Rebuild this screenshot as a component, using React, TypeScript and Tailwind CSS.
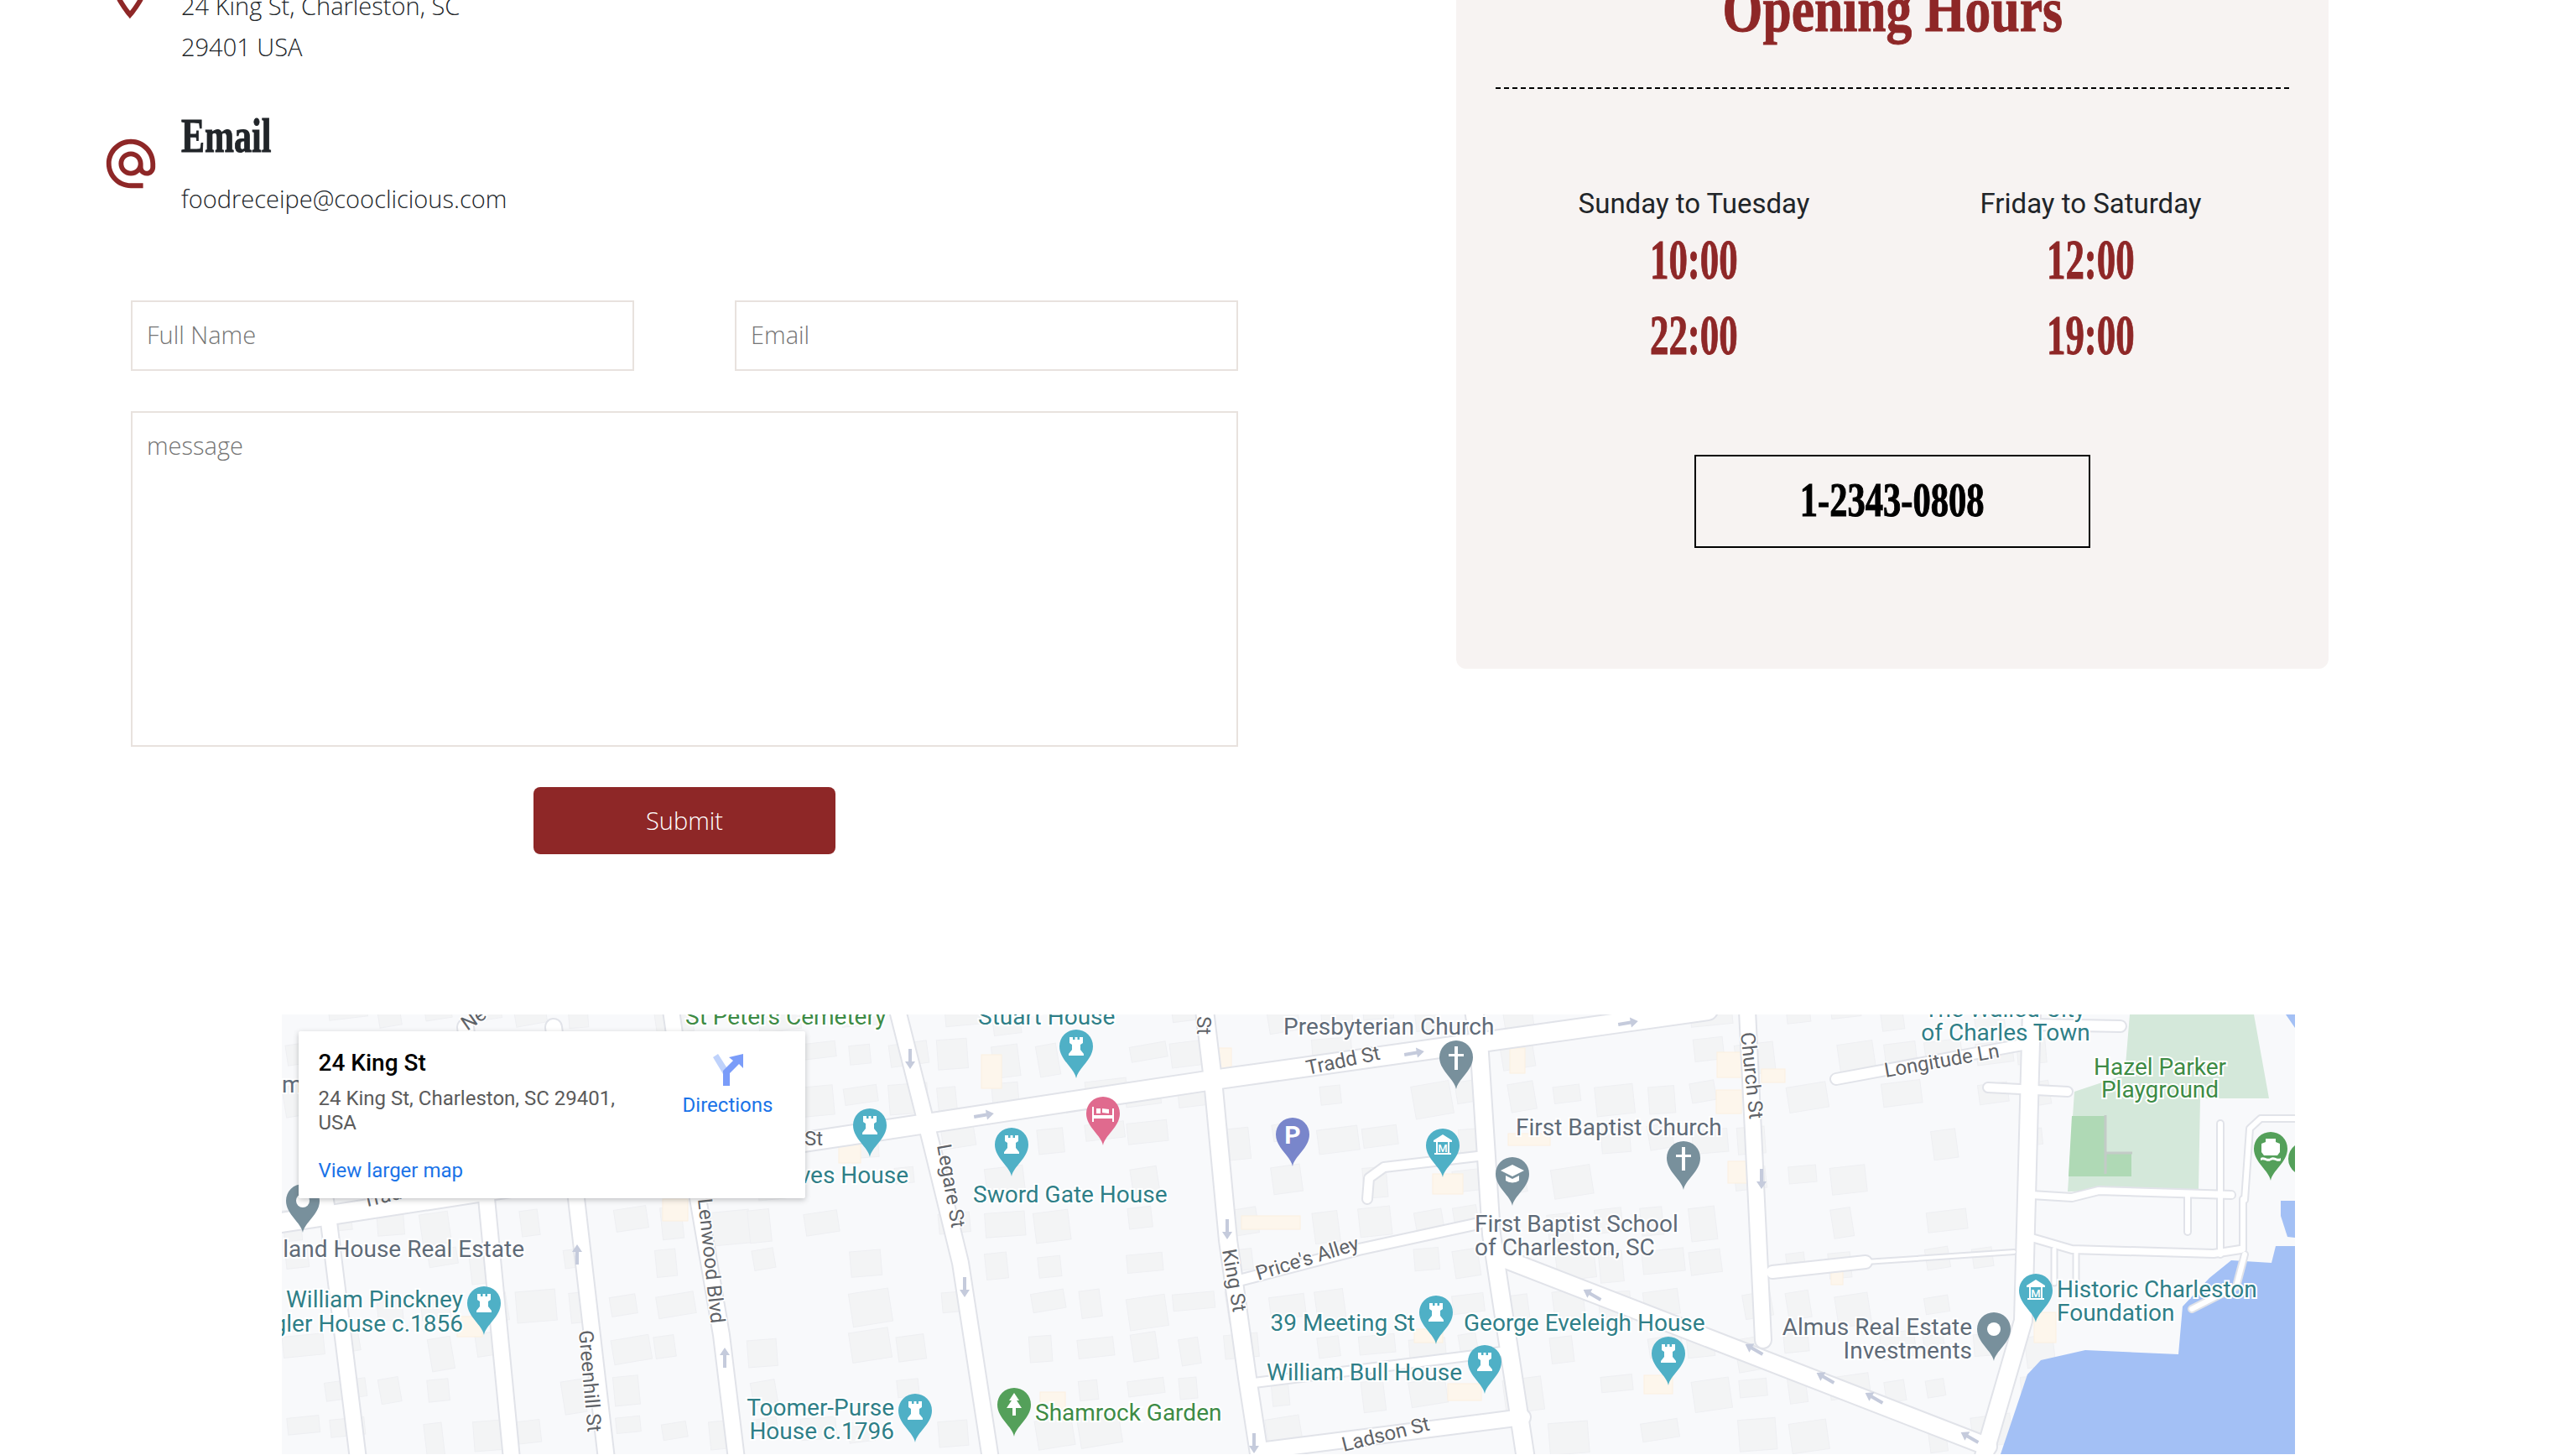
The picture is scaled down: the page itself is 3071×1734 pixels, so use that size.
import { MdAlternateEmail, MdOutlineLocationOn } from "react-icons/md";

const TEAL = "#2f7f88";
const GREEN = "#3d8b45";
const GRAY = "#5f6b78";
const ROAD = "#5f6368";

type Label = [string, number, number, string, ("start" | "end" | "middle")?];
type RoadLabel = [string, number, number, number];
type PinKind = "rook" | "dot" | "bed" | "park" | "cross" | "museum" | "school" | "tree" | "ferry";
type Pin = [number, number, string, PinKind];

const labels: Label[] = [
  ["St Peters Cemetery", 817, 1222, GREEN],
  ["Stuart House", 1166, 1222, TEAL],
  ["Presbyterian Church", 1530, 1234, GRAY],
  ["The Walled City", 2390, 1213, TEAL, "middle"],
  ["of Charles Town", 2391, 1241, TEAL, "middle"],
  ["Hazel Parker", 2575, 1282, GREEN, "middle"],
  ["Playground", 2575, 1309, GREEN, "middle"],
  ["First Baptist Church", 1807, 1354, GRAY],
  ["First Baptist School", 1758, 1469, GRAY],
  ["of Charleston, SC", 1758, 1497, GRAY],
  ["Historic Charleston", 2452, 1547, TEAL],
  ["Foundation", 2452, 1575, TEAL],
  ["Almus Real Estate", 2351, 1592, GRAY, "end"],
  ["Investments", 2351, 1620, GRAY, "end"],
  ["George Eveleigh House", 1745, 1587, TEAL],
  ["39 Meeting St", 1687, 1587, TEAL, "end"],
  ["William Bull House", 1743, 1646, TEAL, "end"],
  ["Shamrock Garden", 1234, 1694, GREEN],
  ["Sword Gate House", 1160, 1434, TEAL],
  ["ves House", 1083, 1411, TEAL, "end"],
  ["land House Real Estate", 625, 1499, GRAY, "end"],
  ["William Pinckney", 552, 1559, TEAL, "end"],
  ["Shingler House c.1856", 552, 1588, TEAL, "end"],
  ["Toomer-Purse", 1066, 1688, TEAL, "end"],
  ["House c.1796", 1066, 1716, TEAL, "end"],
  ["m", 336, 1303, GRAY],
];

const roadLabels: RoadLabel[] = [
  ["Tradd St", 1559, 1282, -12],
  ["Tradd St", 434, 1440, -13],
  ["Longitude Ln", 2248, 1285, -10],
  ["Church St", 2075, 1232, 84],
  ["Lenwood Blvd", 832, 1430, 84],
  ["Greenhill St", 690, 1587, 85],
  ["Legare St", 1117, 1366, 80],
  ["King St", 1457, 1491, 80],
  ["Price's Alley", 1500, 1527, -17],
  ["Ladson St", 1602, 1731, -14],
  ["St", 1427, 1212, 90],
  ["St", 959, 1366, 0],
  ["Ne", 557, 1230, -35],
];

const pins: Pin[] = [
  [361, 1412, "#78909c", "dot"],
  [577, 1534, "#4fb0c6", "rook"],
  [1037, 1322, "#4fb0c6", "rook"],
  [1091, 1662, "#4fb0c6", "rook"],
  [1283, 1228, "#4fb0c6", "rook"],
  [1315, 1308, "#e06a8e", "bed"],
  [1206, 1345, "#4fb0c6", "rook"],
  [1541, 1333, "#7986cb", "park"],
  [1736, 1241, "#78909c", "cross"],
  [1720, 1346, "#4fb0c6", "museum"],
  [1803, 1380, "#78909c", "school"],
  [1712, 1545, "#4fb0c6", "rook"],
  [1770, 1604, "#4fb0c6", "rook"],
  [1209, 1655, "#54a05a", "tree"],
  [2007, 1361, "#78909c", "cross"],
  [2707, 1350, "#54a05a", "ferry"],
  [1989, 1594, "#4fb0c6", "rook"],
  [2427, 1519, "#4fb0c6", "museum"],
  [2377, 1565, "#78909c", "dot"],
];

// [width, points]
const roads: [number, string][] = [
  [22, "336,1458 959,1362 1130,1336 1446,1288 1930,1220 2036,1205"],
  [20, "1436,1205 1446,1288 1464,1479 1487,1643 1502,1740"],
  [18, "1070,1205 1110,1363 1145,1506 1181,1740"],
  [18, "800,1205 832,1429 860,1592 878,1740"],
  [18, "660,1225 687,1429 723,1740"],
  [18, "555,1225 580,1429 610,1740"],
  [18, "372,1340 391,1449 427,1740"],
  [20, "1757,1205 1763,1241 1778,1472 1819,1740"],
  [18, "2083,1205 2102,1598"],
  [20, "2422,1205 2412,1575 2364,1740"],
  [20, "1790,1500 2370,1725"],
  [12, "1477,1527 1620,1490 1763,1459"],
  [18, "1502,1730 1815,1690"],
  [10, "1487,1650 1790,1612"],
  [12, "2189,1287 2422,1244"],
  [12, "2422,1222 2528,1224"],
  [10, "2370,1297 2465,1302"],
  [14, "2113,1517 2224,1505"],
  [4, "2224,1505 2401,1493"],
  [8, "2422,1425 2470,1428 2502,1420 2660,1425"],
  [8, "2422,1476 2470,1490 2639,1495 2671,1490"],
  [6, "2647,1340 2647,1496"],
  [6, "2674,1430 2674,1490"],
  [6, "2676,1431 2682,1346 2695,1334 2736,1334"],
  [6, "2608,1425 2608,1469"],
  [5, "2449,1490 2449,1530"],
  [5, "2475,1495 2475,1530"],
  [6, "2676,1496 2666,1534 2613,1561"],
  [10, "1630,1430 1632,1405 1650,1392 1770,1378"],
];

const arrows: [number, number, number][] = [
  [688, 1496, 0], [864, 1619, 0], [1085, 1263, 180], [1173, 1330, 80], [1686, 1256, 80],
  [1463, 1466, 180], [1150, 1535, 180], [1495, 1721, 180], [1898, 1544, -60], [1941, 1220, 80],
  [2100, 1406, 180], [2091, 1609, -60], [2176, 1643, -60], [2234, 1667, -60], [2348, 1714, -60],
];

const tanBuildings: [number, number, number, number][] = [
  [1170, 1258, 24, 40], [1450, 1250, 18, 30], [1290, 1300, 24, 20], [1800, 1250, 18, 30],
  [1480, 1450, 70, 16], [1708, 1400, 36, 24], [1798, 1352, 50, 14], [1686, 1585, 34, 16],
  [1726, 1650, 40, 20], [2047, 1255, 34, 30], [2100, 1275, 28, 16], [2046, 1300, 30, 28],
  [2060, 1385, 26, 26], [2183, 1510, 14, 22], [2425, 1565, 26, 36], [1240, 1660, 30, 20],
  [545, 1570, 30, 24], [790, 1430, 30, 26], [1000, 1365, 26, 22], [1960, 1640, 34, 22],
];

// deterministic scatter of building blocks, the roads and water are painted over them
const buildings: { x: number; y: number; w: number; h: number; r: number }[] = [];
let seed = 11;
const rand = () => {
  seed = (seed * 16807) % 2147483647;
  return seed / 2147483647;
};
for (let gy = 1190; gy < 1740; gy += 50) {
  for (let gx = 330; gx < 2440; gx += 56) {
    if (rand() < 0.36) continue;
    buildings.push({
      x: gx + rand() * 12,
      y: gy + rand() * 10,
      w: 20 + rand() * 30,
      h: 18 + rand() * 22,
      r: -10 + rand() * 6,
    });
  }
}

function PinGlyph({ kind }: { kind: PinKind }) {
  switch (kind) {
    case "rook":
      return <path d="M-8 9h4v3h2.5v-3h3v3h2.5v-3h4v7l-3 2v6l4 5v2h-18v-2l4-5v-6l-3-2z" fill="#fff" />;
    case "dot":
      return <circle cy="20" r="8" fill="#fff" />;
    case "bed":
      return <path d="M-13 12h2v10h22v-8h2v16h-2v-4h-22v4h-2zM-8 14h5v6h-5zM-1 19v-5l8 1v5z" fill="#fff" />;
    case "park":
      return (
        <text y="31" textAnchor="middle" fontSize="30" fontWeight="700" fill="#fff">
          P
        </text>
      );
    case "cross":
      return <path d="M-2 7h4v9h7v3h-7v16h-4v-16h-7v-3h7z" fill="#fff" />;
    case "museum":
      return (
        <g fill="#fff">
          <path d="M0 7l11 7v2h-22v-2z" />
          <rect x="-10" y="29" width="20" height="2" />
          <rect x="-8" y="16" width="2" height="13" />
          <rect x="6" y="16" width="2" height="13" />
          <text y="28" textAnchor="middle" fontSize="13" fontWeight="500">
            M
          </text>
        </g>
      );
    case "school":
      return (
        <g fill="#fff">
          <path d="M0 9l14 7-14 7-14-7z" />
          <path d="M-8 22l8 4 8-4v6a10 6 0 0 1-16 0z" />
        </g>
      );
    case "tree":
      return <path d="M0 6l6 9h-3l6 9h-7v9h-4v-9h-7l6-9h-3z" fill="#fff" />;
    case "ferry":
      return (
        <g fill="#fff">
          <path d="M-6 8h12v4l5 2v10l-3 4h-16l-3-4v-10l5-2z" />
          <path d="M-12 31c4-3 8 3 12 0s8 3 12 0v3c-4 3-8-3-12 0s-8-3-12 0z" />
        </g>
      );
  }
}

function MapCanvas() {
  return (
    <svg
      viewBox="336 1210 2400 524"
      width="2400"
      height="524"
      className="block font-['Roboto',sans-serif]"
    >
      <rect x="336" y="1210" width="2400" height="524" fill="#f8f9fb" />
      {buildings.map((b, i) => (
        <rect
          key={i}
          x={b.x}
          y={b.y}
          width={b.w}
          height={b.h}
          fill="#f3f4f5"
          stroke="#eeeff2"
          transform={`rotate(${b.r} ${b.x} ${b.y})`}
        />
      ))}
      {tanBuildings.map(([x, y, w, h], i) => (
        <rect key={i} x={x} y={y} width={w} height={h} fill="#fdf6ec" stroke="#fbf0e0" />
      ))}

      <polygon
        points="2539,1210 2687,1210 2705,1310 2623,1310 2621,1418 2465,1421 2473,1302 2533,1282"
        fill="#d4e8da"
      />
      <polygon points="2470,1331 2510,1331 2510,1375 2541,1375 2541,1403 2466,1403" fill="#afd9b5" />
      <path d="M2510 1330v70M2510 1375h32" stroke="#c3cbc7" strokeWidth="3" fill="none" />
      <polygon
        points="2736,1486 2713,1486 2708,1506 2660,1503 2634,1524 2602,1558 2597,1615 2486,1610 2433,1622 2417,1639 2385,1734 2736,1734"
        fill="#a3c0f5"
      />
      <polygon points="2719,1432 2736,1432 2736,1476 2727,1475 2719,1450" fill="#a3c0f5" />
      <polygon points="2725,1210 2736,1210 2736,1226" fill="#a3c0f5" />

      {roads.map(([w, pts], i) => (
        <polyline
          key={`c${i}`}
          points={pts}
          fill="none"
          stroke="#e1e3e9"
          strokeWidth={w + 4}
          strokeLinecap="round"
          strokeLinejoin="round"
        />
      ))}
      {roads.map(([w, pts], i) => (
        <polyline
          key={`r${i}`}
          points={pts}
          fill="none"
          stroke="#fff"
          strokeWidth={w}
          strokeLinecap="round"
          strokeLinejoin="round"
        />
      ))}

      {arrows.map(([x, y, r], i) => (
        <path
          key={i}
          d="M0 -12l6 9h-4v15h-4v-15h-4z"
          fill="#c5cbdc"
          transform={`translate(${x} ${y}) rotate(${r})`}
        />
      ))}

      {labels.map(([text, x, y, color, anchor], i) => (
        <text
          key={i}
          x={x}
          y={y}
          fill={color}
          textAnchor={anchor ?? "start"}
          fontSize="28"
          stroke="#fff"
          strokeWidth="4"
          paintOrder="stroke"
        >
          {text}
        </text>
      ))}
      {roadLabels.map(([text, x, y, r], i) => (
        <text
          key={i}
          x={x}
          y={y}
          fill={ROAD}
          fontSize="24"
          stroke="#fff"
          strokeWidth="3"
          paintOrder="stroke"
          transform={`rotate(${r} ${x} ${y})`}
        >
          {text}
        </text>
      ))}

      {pins.map(([x, y, color, kind], i) => (
        <g key={i} transform={`translate(${x} ${y})`}>
          <path d="M0 58C-2 46-20 36-20 20A20 20 0 1 1 20 20C20 36 2 46 0 58Z" fill={color} />
          <PinGlyph kind={kind} />
        </g>
      ))}
      <path d="M2736 1366a20 20 0 0 0 0 32z" fill="#54a05a" />
    </svg>
  );
}

function InfoCard() {
  return (
    <div className="absolute left-[20px] top-[20px] w-[604px] h-[199px] bg-white rounded-[2px] shadow-[0_2px_6px_rgba(60,64,67,0.3)] px-[24px] pt-[20px] flex font-['Roboto',sans-serif]">
      <div className="w-[390px]">
        <div className="text-[28px] leading-[36px] font-medium text-black">24 King St</div>
        <div className="mt-[10px] text-[24px] leading-[29px] text-[#5b5b5b]">
          24 King St, Charleston, SC 29401, USA
        </div>
        <a className="block mt-[26px] text-[24px] leading-[32px] text-[#1a73e8]">View larger map</a>
      </div>
      <div className="ml-[44px] w-[108px] flex flex-col items-center text-[24px] text-[#1a73e8]">
        <svg viewBox="0 0 36 38" width="36" height="38" className="mt-[7px]">
          <path d="M0 4l6-4 14 22v16h-8V24z" fill="#bfd2fb" />
          <path d="M12 38V20L24 8l-5-4L36 0v17l-5-5-11 11v15z" fill="#7a9cf9" />
        </svg>
        <span className="mt-[7px] leading-[32px]">Directions</span>
      </div>
    </div>
  );
}

function HoursColumn({ day, times }: { day: string; times: string[] }) {
  return (
    <div className="flex flex-col items-center">
      <div className="h-[45px] text-[33px] leading-[48px] text-[#212529] font-['Roboto',sans-serif]">{day}</div>
      {times.map((time) => (
        <div key={time} className="h-[90px] leading-[90px]">
          <span className="inline-block scale-x-[0.66] text-[68px] font-bold text-[#8e2727] [-webkit-text-stroke:1px_#8e2727] font-['Liberation_Serif',serif]">
            {time}
          </span>
        </div>
      ))}
    </div>
  );
}

export default function App() {
  return (
    <div className="h-[1734px] overflow-hidden bg-white">
      <div className="-mt-[120px]">
        <div className="flex">
          <div className="w-[1736px] shrink-0 pt-[102px] text-[29px] leading-[49px] font-light text-[#212529] font-['Open_Sans',sans-serif]">
            <div className="flex items-start">
              <MdOutlineLocationOn className="ml-[120px] mr-[26px] -mt-[24px] shrink-0 text-[#8e2727]" size={70} />
              <div>
                <div>24 King St, Charleston, SC</div>
                <div>29401 USA</div>
              </div>
            </div>
            <div className="flex items-start mt-[48px]">
              <MdAlternateEmail className="ml-[121px] mr-[25px] mt-[32px] shrink-0 text-[#8e2727]" size={70} />
              <div>
                <div className="h-[64px] leading-[68px] origin-left scale-x-[0.75] text-[56px] font-bold [-webkit-text-stroke:1px_#212529] font-['Liberation_Serif',serif]">
                  Email
                </div>
                <div className="mt-[20px]">foodreceipe@cooclicious.com</div>
              </div>
            </div>
            <form className="ml-[156px] w-[1320px] mt-[97px]">
              <div className="grid grid-cols-2 gap-[120px]">
                <input
                  placeholder="Full Name"
                  className="h-[84px] border-2 border-[#e8e2de] px-[17px] pb-[4px] outline-none placeholder:text-[#757575]"
                />
                <input
                  placeholder="Email"
                  className="h-[84px] border-2 border-[#e8e2de] px-[17px] pb-[4px] outline-none placeholder:text-[#757575]"
                />
              </div>
              <textarea
                placeholder="message"
                className="block mt-[48px] w-full h-[400px] border-2 border-[#e8e2de] px-[17px] py-[14px] outline-none resize-none placeholder:text-[#757575]"
              />
              <button
                type="button"
                className="block mx-auto mt-[48px] w-[360px] h-[80px] rounded-[8px] bg-[#8e2727] pb-[2px] text-white"
              >
                Submit
              </button>
            </form>
          </div>

          <div className="w-[1040px] h-[917px] rounded-[12px] bg-[#f7f3f2] px-[47px] pt-[86px]">
            <div className="h-[94px] leading-[90px] text-center">
              <span className="inline-block scale-x-[0.81] text-[76px] font-bold text-[#8e2727] [-webkit-text-stroke:1px_#8e2727] font-['Liberation_Serif',serif]">
                Opening Hours
              </span>
            </div>
            <div className="mt-[44px] border-t-2 border-dashed border-black" />
            <div className="mt-[113px] grid grid-cols-2">
              <HoursColumn day="Sunday to Tuesday" times={["10:00", "22:00"]} />
              <HoursColumn day="Friday to Saturday" times={["12:00", "19:00"]} />
            </div>
            <div className="mx-auto mt-[98px] w-[472px] h-[111px] border-2 border-black flex items-center justify-center">
              <span className="inline-block -translate-y-[2px] scale-x-[0.76] text-[56px] font-bold text-black [-webkit-text-stroke:1px_#000] font-['Liberation_Serif',serif]">
                1-2343-0808
              </span>
            </div>
          </div>
        </div>

        <div className="relative mx-auto mt-[191px] w-[2400px]">
          <MapCanvas />
          <InfoCard />
        </div>
      </div>
    </div>
  );
}
